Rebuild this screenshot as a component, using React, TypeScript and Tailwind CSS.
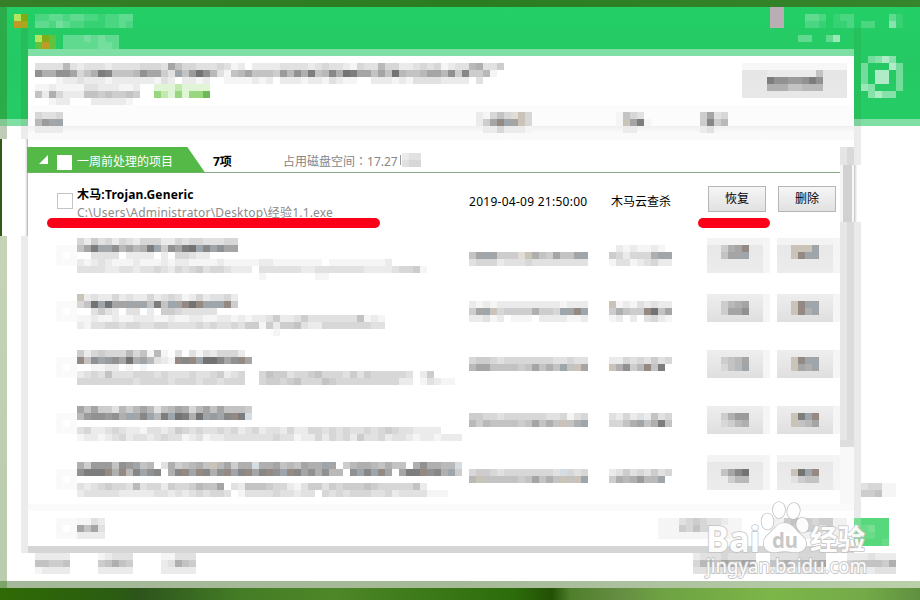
import React from "react";

const tints: Record<string, string> = {
  T: "#c9c3b8", B: "#9ea6ab", R: "#958984", S: "#d5dde2", Y: "#dfddd4",
  G: "#c3e9b0", H: "#dff5d6", J: "#98d780", K: "#6cb956",
  L: "#b4e55c", M: "#82ab18", N: "#bd9b25", O: "#a9a71c", P: "#5fc33e", Q: "#b8aeb4", U: "#6f7a3c",
};

function cellColor(c: string, tone: "gray" | "white") {
  if (c === ".") return "transparent";
  if (tints[c]) return tints[c];
  const n = parseInt(c, 16);
  if (tone === "white") return `rgba(255,255,255,${n * 0.09})`;
  const v = 255 - n * 10;
  return `rgb(${v},${v},${v})`;
}

// Censored block: one string per row, one character per 7px cell.
function Mosaic({ rows, tone = "gray", className = "" }: { rows: string[]; tone?: "gray" | "white"; className?: string }) {
  return (
    <div className={"flex shrink-0 flex-col " + className}>
      {rows.map((r, i) => (
        <div key={i} className="flex h-[7px]">
          {r.split("").map((c, j) => (
            <div key={j} className="h-[7px] w-[7px] shrink-0" style={{ background: cellColor(c, tone) }} />
          ))}
        </div>
      ))}
    </div>
  );
}

type Entry = { title: string[]; path: string[]; date: string[]; kind: string[]; a: string[]; b: string[]; tall?: boolean };

const entries: Entry[] = [
  {
    title: ["42534243244422434433344", "69dB9b7978dB5b9deBcBb99", "..3333.2222.2.44322...."],
    path: ["21232111211121221111211111221111111.111111112.....", "3333223323343243453443222.333333223333333222234451", "..........................1.......11.............."],
    date: [".................", "69B9555YT8659669B", "34442333433333333"],
    kind: [".2121121.", "5424448B9", "133123422"],
    a: ["589R", "699B"], b: ["TTTB", "TRBB"], tall: true,
  },
  {
    title: ["T2322423224234312423342", "46eBe99B9B6d6B9ReRBBBR5", "..3532.33.2.55433333..."],
    path: ["11211211222112112211221212235223533333336121", "21334434433443333434334355152556322444444433", "............................1..............."],
    date: ["21212222222221222", "59BT455558554BBRB", "22312.111.2222112"],
    kind: ["T12132322", "58655Re69", "1202.3421"],
    a: ["5789", "599b"], b: ["TRBB", "TR8B"],
  },
  {
    title: ["5245444746171.3.31324442.", "R6bBab9e8B7321RcRBeec9bR9", "..1122.1.1..............."],
    path: ["234363334443433343345234..4655344564443535444443.25...", "444444443444434443443444..4554564446544444444422.13211"],
    date: ["45543444444433433", "7996666569686B6T9"],
    kind: ["224343534", "T8b57R6d.", "........."],
    a: ["5679", "467B"], b: ["TRBB", "T98B"],
  },
  {
    title: ["9695537579736798479696665", "7abbab8B9cB7dBed8eBaBcRdS"],
    path: ["3422343221332354343343423423324224434343343454332222...", "1221234233234331231223333333433122424342533423321221222"],
    date: ["55443444444334134", "7576666569686T68B"],
    kind: ["324232634", "4468B68d6"],
    a: ["58aa", "4578"], b: ["TdBR", "T679"],
  },
  {
    title: ["85aaa6baB67.3856786T79588S889676988B9.578876866.8b8877S", "bdddR8R7cBbc.8cRBRc8bRBcR9cRbBRc9b8b77.bBcBR9.9ddRbc8B5"],
    path: ["323454437344254457669.3266654421355354555654444462.....", "2333332222233232343443.13333433233.434344433423333111.."],
    date: ["4554344444443S434", "7T66666569686T6TB"],
    kind: ["235343534", "5878a77B."],
    a: ["69ce", "2577"], b: ["TeBR", "3566"], tall: true,
  },
];

function BlurButton({ rows, tall, last }: { rows: string[]; tall?: boolean; last?: boolean }) {
  return (
    <div className={"flex shrink-0 " + (last ? "-mt-[7px]" : "")}>
      <div className={"flex w-14 justify-center " + (tall ? "h-[35px] bg-linear-to-b from-[#f3f3f3] from-20% via-[#e8e8e8] via-20% to-[#ececec]" : "h-7 bg-linear-to-b from-[#eeeeee] to-[#dfdfdf]") + (last ? " pt-[14px]" : " pt-[7px]")}>
        <Mosaic rows={rows} />
      </div>
      <div className={"w-[7px] bg-[#f5f5f5] " + (tall ? "h-[35px]" : "h-7")} />
    </div>
  );
}

function EntryRow({ e, index }: { e: Entry; index: number }) {
  const last = index === 4;
  return (
    <div className={"flex shrink-0 items-start overflow-visible pl-7 " + (last ? "h-[42px]" : "h-14")}>
      <div className="w-[21px] pt-[7px]"><Mosaic rows={["111", "1.1", "111"]} className="opacity-40" /></div>
      <div className="w-[392px]">
        <Mosaic rows={e.title} />
        <Mosaic rows={e.path} className={e.title.length === 2 ? "mt-[7px]" : ""} />
      </div>
      <div className="w-[140px] pt-[7px]"><Mosaic rows={e.date} /></div>
      <div className="w-[98px] pt-[7px]"><Mosaic rows={e.kind} /></div>
      <div className="flex gap-[7px]">
        <BlurButton rows={e.a} tall={e.tall} last={last} />
        <BlurButton rows={e.b} tall={e.tall} last={last} />
      </div>
    </div>
  );
}

function ActionButton({ label }: { label: string }) {
  return (
    <button className="flex h-[26px] w-[58px] items-center justify-center border border-[#b5b5b5] bg-linear-to-b from-[#f6f6f6] to-[#e1e1e1] pb-px text-[12px] text-black">
      {label}
    </button>
  );
}

function Description() {
  return (
    <div className="flex h-[49px] shrink-0 justify-between bg-white pt-[7px] pl-[7px]">
      <div>
        <Mosaic
          rows={[
            "333373233323333444396443334312.222233332343321433744223434123378335",
            "b88bb9468dc6667b9953B6aeb7316796665a7b8d67c8ed99696e7667997b5c5571",
            "...12232221222222132.2212..1111212.22212213211..22212133332222.3.",
          ]}
        />
        <div className="flex gap-[14px]">
          <Mosaic rows={["112111133222112", "628422266565565", "..122...222221."]} />
          <Mosaic rows={["HHHGHHHH", "JGHJHJJK"]} />
        </div>
      </div>
      <div className="mr-[7px] flex h-[35px] w-[105px] items-start justify-center bg-linear-to-b from-[#f7f7f7] from-20% via-[#e6e6e6] via-20% to-[#e8e8e8] pt-[7px]">
        <Mosaic rows={["22222226", "dbbaabdb", "88866777"]} />
      </div>
    </div>
  );
}

function ColumnHeader() {
  return (
    <div className="flex h-[35px] shrink-0 bg-linear-to-b from-[#fcfcfc] from-60% via-[#f0f0f0] via-60% to-[#fafafa] to-80% pt-[7px] pl-[7px]">
      <Mosaic rows={["4334", "7a9B", "2222"]} className="mr-[413px]" />
      <Mosaic rows={["21464YT4", "259RB9T4", ".2242221"]} className="mr-[84px]" />
      <Mosaic rows={["1643.", "1T9d1", ".22.."]} className="mr-[49px]" />
      <Mosaic rows={["5934", "5c57", "23.."]} />
    </div>
  );
}

function GroupBar() {
  return (
    <div className="relative -ml-px flex h-[26px] w-[813px] shrink-0 items-center border-b border-[#88aa85] text-[12px]">
      <div className="flex h-[26px] w-[178px] shrink-0 items-center bg-[#55b948] pl-3 text-white [clip-path:polygon(0_0,160px_0,178px_100%,0_100%)]">
        <div className="h-[9px] w-[9px] bg-white [clip-path:polygon(100%_0,100%_100%,0_100%)]" />
        <div className="mt-[5px] ml-[9px] h-[15px] w-[15px] bg-white" />
        <span className="mt-1 ml-[5px] whitespace-nowrap">一周前处理的项目</span>
      </div>
      <span className="ml-2 w-[70px] pt-1 font-bold text-black">7项</span>
      <span className="w-[118px] pt-1 whitespace-nowrap text-[#858585]">占用磁盘空间<span className="[font-family:'Noto_Sans_CJK_TC',sans-serif]">：</span>17.27</span>
      <span className="mr-px -ml-px h-[10px] w-px bg-[#999]" />
      <Mosaic rows={["233", "344"]} className="-mr-px w-[19px] overflow-hidden" />
    </div>
  );
}

function FirstEntry() {
  return (
    <div className="relative flex h-[65px] shrink-0 items-start pl-[29px] text-[12px]">
      <div className="mt-[20px] h-4 w-4 border border-[#c4c4c4] bg-white" />
      <div className="ml-1 w-[392px] pt-[13px] leading-[18px] whitespace-nowrap">
        <div className="font-bold tracking-[0.18px] text-black">木马:Trojan.Generic</div>
        <div className="tracking-[0.18px] text-[#8b8b8b]">C:\Users\Administrator\Desktop\经验1.1.exe</div>
      </div>
      <div className="w-[142px] pt-[20px] leading-[18px] tracking-[0.27px] whitespace-nowrap text-black">2019-04-09 21:50:00</div>
      <div className="w-[97px] pt-[20px] leading-[18px] text-black">木马云查杀</div>
      <div className="flex gap-3 pt-[13px]">
        <ActionButton label="恢复" />
        <ActionButton label="删除" />
      </div>
      <div className="absolute top-[45px] left-[19px] h-[10px] w-[333px] rounded-full bg-[#fb0019]" />
      <div className="absolute top-[45px] left-[670px] h-[10px] w-[72px] rounded-full bg-[#fb0019]" />
    </div>
  );
}

function Scrollbar() {
  return (
    <div className="flex h-[357px] w-[14px] shrink-0 flex-col">
      <div className="h-[18px] bg-linear-to-r from-[#e5e5e5] from-50% to-[#d9d9d9] to-50%" />
      <div className="flex h-[57px]">
        <div className="w-[3px] bg-[#f5f5f5]" />
        <div className="w-[9px] bg-[#d1d1d1]" />
        <div className="w-[2px] bg-[#f8f8f8]" />
      </div>
      <div className="h-[218px] bg-linear-to-r from-[#e7e7e7] from-50% to-[#dbdbdb] to-50%" />
      <div className="h-[7px] bg-[#dedede]" />
      <div className="h-[57px] bg-[#f8f8f8]" />
    </div>
  );
}

function Footer() {
  return (
    <div className="flex h-[42px] shrink-0 flex-col bg-white">
      <div className="h-[7px] bg-[#fafafa]" />
      <div className="flex pt-[7px] pl-7">
        <Mosaic rows={["111", "1.1", "111"]} className="opacity-50" />
        <Mosaic rows={["1132", "9693", "2222"]} className="mr-[553px]" />
        <Mosaic rows={["111345433211", "111546443111", "111111111111"]} />
        <div className="ml-7 flex h-[21px] w-[77px] justify-center bg-[#f1f1f1]">
          <Mosaic rows={["5665455", "5555535"]} />
        </div>
      </div>
    </div>
  );
}

function Dialog() {
  return (
    <div className="absolute top-7 left-[21px] flex h-[525px] w-[840px]">
      <div className="flex w-[7px] flex-col">
        <div className="h-[91px] bg-[#26bd5a]" />
        <div className="h-[7px] bg-[#7ed19a]" />
        <div className="h-[13px] bg-[#ececec]" />
        <div className="h-[97px] border-r border-[#bdbdbd] bg-linear-to-r from-white from-60% to-[#dddddd]" />
        <div className="grow bg-[#ebebeb]" />
      </div>
      <div className="flex w-[826px] flex-col bg-white">
        <div className="flex h-[21px] shrink-0 bg-[#25cc66] pt-[7px] pl-[7px]">
          <Mosaic rows={["LMP", "PNP"]} />
          <Mosaic tone="white" rows={["33343433", "33333443"]} className="ml-[7px]" />
          <Mosaic tone="white" rows={["33..36", "......"]} className="ml-[679px]" />
        </div>
        <div className="h-[7px] shrink-0 bg-[#80dfa5]" />
        <Description />
        <ColumnHeader />
        <div className="h-[7px] shrink-0" />
        <div className="flex h-[357px] shrink-0">
          <div className="flex w-[812px] flex-col">
            <GroupBar />
            <FirstEntry />
            {entries.map((e, i) => <EntryRow key={i} e={e} index={i} />)}
          </div>
          <Scrollbar />
        </div>
        <Footer />
        <div className="h-[7px] shrink-0 bg-[#d5d5d5]" />
      </div>
      <div className="flex w-[7px] flex-col">
        <div className="h-[91px] bg-[#26c05d]" />
        <div className="h-[7px] bg-[#7ed19a]" />
        <div className="h-[39px] bg-[#ebebeb]" />
        <div className="h-[57px] border-l border-[#cccccc] bg-linear-to-r from-[#dddddd] to-white to-40%" />
        <div className="h-[296px] bg-[#eaeaea]" />
      </div>
    </div>
  );
}

function MainWindow() {
  return (
    <div className="flex h-[593px] w-[920px]">
      <div className="flex w-[7px] shrink-0 flex-col">
        <div className="h-28 bg-[#2bac4a]" />
        <div className="h-[7px] bg-[#82c893]" />
        <div className="h-[13px] bg-[#c0cbb8]" />
        <div className="h-[97px] border-l-2 border-[#2f5b12] bg-white" />
        <div className="h-[345px] bg-linear-to-b from-[#c6d3b7] to-[#b9ccad]" />
        <div className="h-[7px] bg-[#7fa46b]" />
      </div>
      <div className="flex w-[913px] shrink-0 flex-col">
        <div className="flex h-28 bg-linear-to-b from-[#23cf66] via-[#25c964] to-[#25cc66] pt-[7px] pl-[7px]">
          <Mosaic rows={["LM", "NO"]} className="h-[14px]" />
          <Mosaic tone="white" rows={["22332332212233", "33243221112232"]} className="ml-[7px]" />
          <Mosaic rows={["QQ", "QQ", "QQ"]} className="-mt-[7px] ml-[637px] h-[21px]" />
          <Mosaic tone="white" rows={["332.122.....31", "221.112.22..51"]} className="ml-[21px]" />
        </div>
        <div className="h-[7px] shrink-0 bg-[#80dfa5]" />
        <div className="flex h-[427px] shrink-0 justify-end bg-white pt-[357px] pr-6">
          <Mosaic rows={["234411", "355611"]} />
        </div>
        <div className="flex h-7 shrink-0 items-start bg-white pl-7">
          <Mosaic rows={["22222", "66556", "12222"]} className="mr-7" />
          <Mosaic rows={["12333", "56865", "22222"]} className="mr-7" />
          <Mosaic rows={["11333", "23865", "22222"]} className="mr-[497px]" />
          <Mosaic rows={["233343333", "478698899", "333333333"]} className="mr-[14px]" />
          <Mosaic rows={["33334444", "67867889", "22233332"]} className="mr-[21px]" />
          <Mosaic rows={["2223222", "4566658", "2222333"]} />
        </div>
        <div className="h-[7px] shrink-0 bg-linear-to-r from-[#a5b99a] via-[#a6b999] to-[#bacfaa]" />
      </div>
    </div>
  );
}

function Watermark() {
  return (
    <svg className="absolute top-[496px] left-[700px]" width="175" height="88" viewBox="700 496 175 88">
      <g fill="white" stroke="#c2c2c2" strokeWidth="1.6" strokeLinejoin="round" opacity="0.94" style={{ paintOrder: "stroke" }}>
        <text x="706" y="552" fontSize="35" fontWeight="bold" textLength="54" lengthAdjust="spacingAndGlyphs" fontFamily="Noto Sans, sans-serif">Bai</text>
        <ellipse cx="767.5" cy="521.5" rx="6" ry="8" />
        <ellipse cx="779" cy="510" rx="6" ry="8" />
        <ellipse cx="793.5" cy="511" rx="6.2" ry="8" transform="rotate(8 793.5 511)" />
        <ellipse cx="802.5" cy="525" rx="6" ry="7.5" transform="rotate(-15 802.5 525)" />
        <path d="M784 523 C778 523 775 528 771 532 C767 536 763 538 764 545 C765 552 772 553 778 552 C783 551 787 551 791 552 C798 553 805 552 806 545 C807 538 801 536 797 531 C793 526 790 523 784 523Z" />
        <text x="810" y="550" fontSize="28" fontWeight="bold" textLength="55" lengthAdjust="spacingAndGlyphs" fontFamily="Noto Sans CJK SC, sans-serif">经验</text>
        <text x="706" y="573" fontSize="19" strokeWidth="1.8" textLength="161" lengthAdjust="spacingAndGlyphs" fontFamily="Noto Sans, sans-serif">jingyan.baidu.com</text>
      </g>
      <text x="772" y="548" fontSize="22" fontWeight="bold" fill="#c8c8c8" textLength="26" lengthAdjust="spacingAndGlyphs" fontFamily="Noto Sans, sans-serif">du</text>
    </svg>
  );
}

export default function App() {
  return (
    <main className="relative flex h-[600px] w-[920px] flex-col overflow-hidden bg-[linear-gradient(90deg,#2f6b05_0%,#2b5c12_13%,#2d541c_15%,#437c25_26%,#4e8728_36%,#2c6c0a_56%,#235005_60%,#4f7f2a_62%,#648c42_67%,#6ea243_72%,#7cb648_84%,#74aa48_94%,#5f9040_100%)] [font-family:'Noto_Sans','Noto_Sans_CJK_SC',sans-serif]">
      <div className="h-[7px] shrink-0 bg-linear-to-r from-[#367e27] via-[#2b7c20] to-[#36852c]" />
      <div className="h-[581px] shrink-0 overflow-hidden"><MainWindow /></div>
      <Dialog />
      <Mosaic tone="white" rows={[".4575.", "4...74", "4.77.4", "4.77.4", "65...4", ".5755."]} className="absolute top-14 left-[861px]" />
      <div className="absolute top-[518px] left-[854px] h-7 w-[35px] bg-[#58d87c]">
        <Mosaic tone="white" rows={["20000", "21200", "21100", "20001"]} />
      </div>
      <Watermark />
    </main>
  );
}
